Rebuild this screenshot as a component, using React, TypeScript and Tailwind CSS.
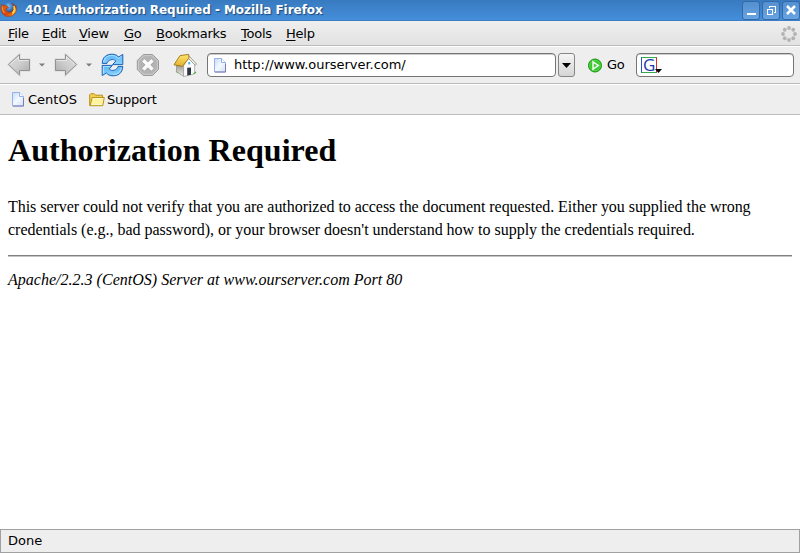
import type { ReactNode } from "react";

function FirefoxLogo() {
  return (
    <svg width="18" height="18" viewBox="0 0 18 18">
      <defs>
        <radialGradient id="globe" cx="45%" cy="30%" r="65%">
          <stop offset="0" stopColor="#7cc4ee" />
          <stop offset="0.6" stopColor="#2a62b4" />
          <stop offset="1" stopColor="#142c6c" />
        </radialGradient>
        <linearGradient id="fox" x1="0" y1="0" x2="1" y2="1">
          <stop offset="0" stopColor="#e0661c" />
          <stop offset="0.6" stopColor="#d9480f" />
          <stop offset="1" stopColor="#f6a51c" />
        </linearGradient>
      </defs>
      <circle cx="9" cy="8" r="7" fill="url(#globe)" />
      <path d="M1.6 3.2 L3.2 4.6 Q5 3.8 6.8 5 L8.6 6.6 L6.4 7.6 Q5.4 9 7 10.6 Q9.6 12.2 12 10.4 Q14.4 8 13.4 4.6 L12.4 2.4 Q15 3.6 15.4 5.6 L16 4.6 Q17.6 9.4 14.6 13 Q11.4 16.4 6.8 15.4 Q1.4 13.6 1 8 Q1 5 1.6 3.2Z" fill="url(#fox)" stroke="#8f3010" strokeWidth="0.5" />
      <path d="M14 5 Q15.6 9 12.6 12 Q14.8 9 14 5Z M14.8 6.6 Q16.4 10.6 12.4 13.6" fill="#ffd83c" stroke="#ffd23a" strokeWidth="1" />
      <path d="M2.4 6 Q2 9.6 4.4 12" fill="none" stroke="#f39a32" strokeWidth="1" />
    </svg>
  );
}

function ArrowLeft({ flip = false }: { flip?: boolean }) {
  return (
    <svg width="24" height="24" viewBox="0 0 24 24" className={flip ? "-scale-x-100" : ""}>
      <defs>
        <linearGradient id="arrow" x1="0" y1="0" x2="1" y2="1">
          <stop offset="0" stopColor="#e0e0e0" />
          <stop offset="0.5" stopColor="#cdcdcd" />
          <stop offset="1" stopColor="#aaaaaa" />
        </linearGradient>
      </defs>
      <path d="M1.5 11.5 L12.5 1.5 V6.5 H22.5 V17.5 H12.5 V22 Z" fill="none" stroke="#dedede" strokeWidth="2.4" />
      <path d="M1.5 11.5 L12.5 1.5 V6.5 H22.5 V17.5 H12.5 V22 Z" fill="url(#arrow)" stroke="#929292" strokeLinejoin="round" />
      <path d="M3 11.5 L11.5 3.8 V7.5 H21.5" fill="none" stroke="#e8e8e8" />
    </svg>
  );
}

function Caret() {
  return (
    <svg width="6" height="4" viewBox="0 0 6 4">
      <path d="M0 0.5 H6 L3 3.5Z" fill="#7c7c7c" />
    </svg>
  );
}

function ReloadIcon() {
  return (
    <svg width="25" height="24" viewBox="0 0 25 24">
      <defs>
        <linearGradient id="reload" x1="0" y1="0" x2="0" y2="1">
          <stop offset="0" stopColor="#58b4f8" />
          <stop offset="1" stopColor="#8bd2ff" />
        </linearGradient>
      </defs>
      <g fill="url(#reload)" stroke="#1e63b4" strokeWidth="1" strokeLinejoin="round">
        <path d="M2.2 10.4 C2.6 3.5 7 1.2 12 1.2 C15 1.2 17.2 2.2 18.6 4 L22.8 1.4 V11.6 H12.6 L15.8 8 C14.4 6.6 12.6 6.2 10.8 6.8 C8.6 7.4 7.4 8.8 7 10.4Z" />
        <path d="M22.8 13.4 C22.4 20.4 18 22.8 13 22.8 C10 22.8 7.8 21.8 6.4 20 L2.2 22.6 V12.4 H12.4 L9.2 16 C10.6 17.4 12.4 17.8 14.2 17.2 C16.4 16.6 17.6 15.2 18 13.4Z" />
      </g>
      <path d="M3.6 9 C4.4 4.4 8 2.5 12 2.5 C14.6 2.5 16.8 3.6 18.2 5.5 L21.6 3.4 M3.4 20.4 V13.6 H10 M21.4 14.6 C20 20 17 21.4 13.4 21.4" fill="none" stroke="#c5eaff" strokeWidth="0.8" />
    </svg>
  );
}

function StopIcon() {
  return (
    <svg width="24" height="24" viewBox="0 0 24 24">
      <path d="M7.3 1.5 H16.5 L22.5 7.5 V16.5 L16.5 22.5 H7.3 L1.3 16.5 V7.5Z" fill="#bdbdbd" stroke="#9a9a9a" />
      <path d="M7.8 2.7 H16 L21.3 8 V16 L16 21.3 H7.8 L2.5 16 V8Z" fill="#b3b3b3" stroke="#cecece" strokeWidth="0.8" />
      <path d="M7.3 7.3 L16.5 16.5 M16.5 7.3 L7.3 16.5" stroke="#a2a2a2" strokeWidth="4.6" />
      <path d="M7.3 7.3 L16.5 16.5 M16.5 7.3 L7.3 16.5" stroke="#fafafa" strokeWidth="3.5" />
    </svg>
  );
}

function HomeIcon() {
  return (
    <svg width="25" height="25" viewBox="0 0 25 25">
      <defs>
        <linearGradient id="roof" x1="0" y1="0" x2="0" y2="1">
          <stop offset="0" stopColor="#ffe66e" />
          <stop offset="1" stopColor="#e3b02c" />
        </linearGradient>
        <linearGradient id="wall" x1="0" y1="0" x2="0" y2="1">
          <stop offset="0" stopColor="#9c9c94" />
          <stop offset="1" stopColor="#ecece6" />
        </linearGradient>
      </defs>
      <path d="M3.5 12 H10.6 V23.2 L3.5 18.8Z" fill="url(#wall)" stroke="#8c8c84" strokeWidth="0.7" />
      <path d="M10.6 12.5 L16.2 4 L21.6 11 V20.8 L10.6 23.6Z" fill="#fcfcfc" stroke="#9a9a9a" strokeWidth="0.7" />
      <path d="M14.2 22.6 V14.8 L18 14.4 V21.8Z" fill="#2d3545" />
      <rect x="15.2" y="9" width="2" height="2.4" fill="#41b5e8" />
      <path d="M15.2 2 L23.6 11.2 L22.2 12.4 L15.8 5.6" fill="#f7f5ef" stroke="#7a7668" strokeWidth="0.7" />
      <path d="M1 11.8 L7 2.6 L15.6 1.4 L16 5 L9.4 13.4Z" fill="url(#roof)" stroke="#9b7418" strokeWidth="0.9" strokeLinejoin="round" />
      <path d="M20.4 20.6 L22.8 18.8 V20Z M5 20 L2.8 18.6" fill="#4ea83f" stroke="#4ea83f" strokeWidth="0.5" />
    </svg>
  );
}

function PageIcon() {
  return (
    <svg width="12" height="15" viewBox="0 0 12 15">
      <defs>
        <linearGradient id="page" x1="0" y1="0" x2="1" y2="1">
          <stop offset="0" stopColor="#c4dbff" />
          <stop offset="0.5" stopColor="#f5f9ff" />
          <stop offset="1" stopColor="#cfe0fa" />
        </linearGradient>
      </defs>
      <path d="M0.5 0.5 H7.5 L11.5 4.5 V14 H0.5Z" fill="url(#page)" stroke="#94b1e8" />
      <path d="M7.5 0.5 V4.5 H11.5" fill="#fff" stroke="#94b1e8" />
      <path d="M1 14 H11.5 V6" fill="none" stroke="#8178b4" />
    </svg>
  );
}

function FolderIcon() {
  return (
    <svg width="16" height="14" viewBox="0 0 16 14">
      <path d="M0.7 12.5 V1.8 L1.8 0.7 H5.2 L6.5 2.2 H13.5 V12.5Z" fill="#f2cf50" stroke="#b9921a" />
      <path d="M3.2 4.5 H15.3 L13.8 12.7 H1.1Z" fill="#fff3a0" stroke="#b9921a" strokeLinejoin="round" />
      <path d="M4 5.5 H14 M2.4 11.6 H12.9" stroke="#fffbd4" strokeWidth="0.9" />
    </svg>
  );
}

function Throbber() {
  const dots = Array.from({ length: 8 }, (_, i) => (i * Math.PI) / 4);
  return (
    <svg width="16" height="16" viewBox="0 0 16 16">
      {dots.map((a) => (
        <circle key={a} cx={8 + 6 * Math.cos(a)} cy={8 + 6 * Math.sin(a)} r="1.9" fill="#b3b3b3" />
      ))}
    </svg>
  );
}

function WindowButton({ children }: { children: ReactNode }) {
  return (
    <div className="h-[19px] w-[18px] rounded-[3px] border border-[#3369a7] bg-linear-to-b from-[#5490cf] to-[#68a4e2]">
      <svg width="16" height="17" viewBox="0 0 16 17" fill="none" stroke="white" shapeRendering="crispEdges">
        {children}
      </svg>
    </div>
  );
}

function MenuItem({ label, width }: { label: string; width: string }) {
  return (
    <span className={width}>
      <span className="underline decoration-1 underline-offset-2">{label[0]}</span>
      {label.slice(1)}
    </span>
  );
}

export default function App() {
  return (
    <div className="flex h-[553px] w-[800px] flex-col overflow-hidden bg-white font-['DejaVu_Sans',sans-serif] text-[13px] whitespace-nowrap text-black">
      <header className="flex h-[21px] shrink-0 items-center border-b border-[#3b7ec5] bg-linear-to-b from-[#387abf] to-[#458edb]">
        <FirefoxLogo />
        <span className="ml-[7px] text-[12px] leading-[20px] font-bold tracking-[-0.04px] text-white [text-shadow:1px_1px_1px_#1b4779]">
          401 Authorization Required - Mozilla Firefox
        </span>
        <div className="ml-auto flex gap-[2px]">
          <WindowButton><path d="M4 12 H13" strokeWidth="2" /></WindowButton>
          <WindowButton>
            <path d="M6.5 6 V4.5 H12.5 V10.5 H11" />
            <path d="M4.5 7.5 H9.5 V12.5 H4.5Z M4 7 H10" />
          </WindowButton>
          <WindowButton><path d="M4 4 L12 12 M12 4 L4 12" strokeWidth="2.5" shapeRendering="auto" /></WindowButton>
        </div>
      </header>

      <nav className="flex h-[26px] shrink-0 items-center border-b border-white bg-linear-to-b from-[#eeeeee] to-[#e2e2e2] pl-2 tracking-[-0.25px] shadow-[inset_0_-1px_0_#bcbcbc]">
        <MenuItem label="File" width="w-[34px]" />
        <MenuItem label="Edit" width="w-[37px]" />
        <MenuItem label="View" width="w-[45px]" />
        <MenuItem label="Go" width="w-[32px]" />
        <MenuItem label="Bookmarks" width="w-[85px]" />
        <MenuItem label="Tools" width="w-[45px]" />
        <MenuItem label="Help" width="w-[40px]" />
        <span className="mr-[3px] ml-auto"><Throbber /></span>
      </nav>

      <div className="flex h-[38px] shrink-0 items-center border-b border-white bg-[#eeeeee] pb-px pl-[7px] shadow-[inset_0_-1px_0_#bcbcbc]">
        <ArrowLeft />
        <span className="ml-[8px]"><Caret /></span>
        <span className="ml-[9px]"><ArrowLeft flip /></span>
        <span className="ml-[8px]"><Caret /></span>
        <span className="ml-[8px]"><ReloadIcon /></span>
        <span className="ml-[11px]"><StopIcon /></span>
        <span className="ml-[13px]"><HomeIcon /></span>
        <div className="ml-[9px] flex h-[24px] w-[349px] items-center rounded-[4px] border border-[#757575] bg-white pl-[6px] shadow-[inset_0_1px_0_#cccccc]">
          <PageIcon />
          <span className="ml-[8px] tracking-[-0.03px]">http://www.ourserver.com/</span>
        </div>
        <div className="ml-[2px] flex h-[24px] w-[17px] items-center justify-center rounded-[3px] border border-[#858585] bg-linear-to-b from-[#f5f5f5] to-[#d5d5d5]">
          <svg width="9" height="5" viewBox="0 0 9 5"><path d="M0 0 H9 L4.5 5Z" fill="black" /></svg>
        </div>
        <svg className="ml-[13px]" width="14" height="15" viewBox="0 0 14 15">
          <circle cx="7" cy="7.5" r="6.5" fill="#35c92b" stroke="#178f12" />
          <circle cx="7" cy="7.5" r="5.3" fill="none" stroke="#5cda4a" strokeWidth="0.8" />
          <path d="M5 3.8 L10.4 7.5 L5 11.2Z" fill="#4dc83f" stroke="white" strokeWidth="1.4" />
        </svg>
        <span className="ml-[5px] w-[29px] tracking-[-0.2px]">Go</span>
        <div className="flex h-[24px] w-[158px] items-center rounded-[4px] border border-[#757575] bg-white pl-[4px] shadow-[inset_0_1px_0_#cccccc]">
          <div className="relative h-4 w-4 border border-t-[#35a84a] border-r-[#df2c1f] border-b-[#35a84a] border-l-[#2455c3]">
            <span className="absolute top-0 left-px font-['Open_Sans',sans-serif] text-[17px] leading-[14px] text-[#1739ad]">G</span>
            <svg className="absolute top-[11px] left-[13px]" width="7" height="4" viewBox="0 0 7 4"><path d="M0 0 H7 L3.5 4Z" fill="black" /></svg>
          </div>
        </div>
      </div>

      <div className="flex h-[30px] shrink-0 items-center border-b border-[#bcbcbc] bg-[#eeeeee] pl-[12px]">
        <PageIcon />
        <span className="ml-[4px] w-[61px]">CentOS</span>
        <FolderIcon />
        <span className="ml-[2px] tracking-[-0.25px]">Support</span>
      </div>

      <main className="flex-1 px-2 pt-[15px] font-['Liberation_Serif',serif]">
        <h1 className="text-[32px] leading-[40px] font-bold tracking-[0.04px]">Authorization Required</h1>
        <p className="mt-[25px] text-[16px] leading-[23px] tracking-[-0.045px]">
          This server could not verify that you are authorized to access the document requested. Either you supplied the wrong
          <br />
          <span className="tracking-[-0.015px]">
            credentials (e.g., bad password), or your browser doesn't understand how to supply the credentials required.
          </span>
        </p>
        <hr className="mt-[14px] h-[2px] border-t border-b border-t-[#808080] border-b-[#c4c4c4]" />
        <address className="mt-[11px] text-[16px] leading-[23px] italic tracking-[0.015px]">
          Apache/2.2.3 (CentOS) Server at www.ourserver.com Port 80
        </address>
      </main>

      <footer className="flex h-[24px] shrink-0 items-center border border-[#a1a1a1] bg-[#eeeeee] pl-[7px]">Done</footer>
    </div>
  );
}
